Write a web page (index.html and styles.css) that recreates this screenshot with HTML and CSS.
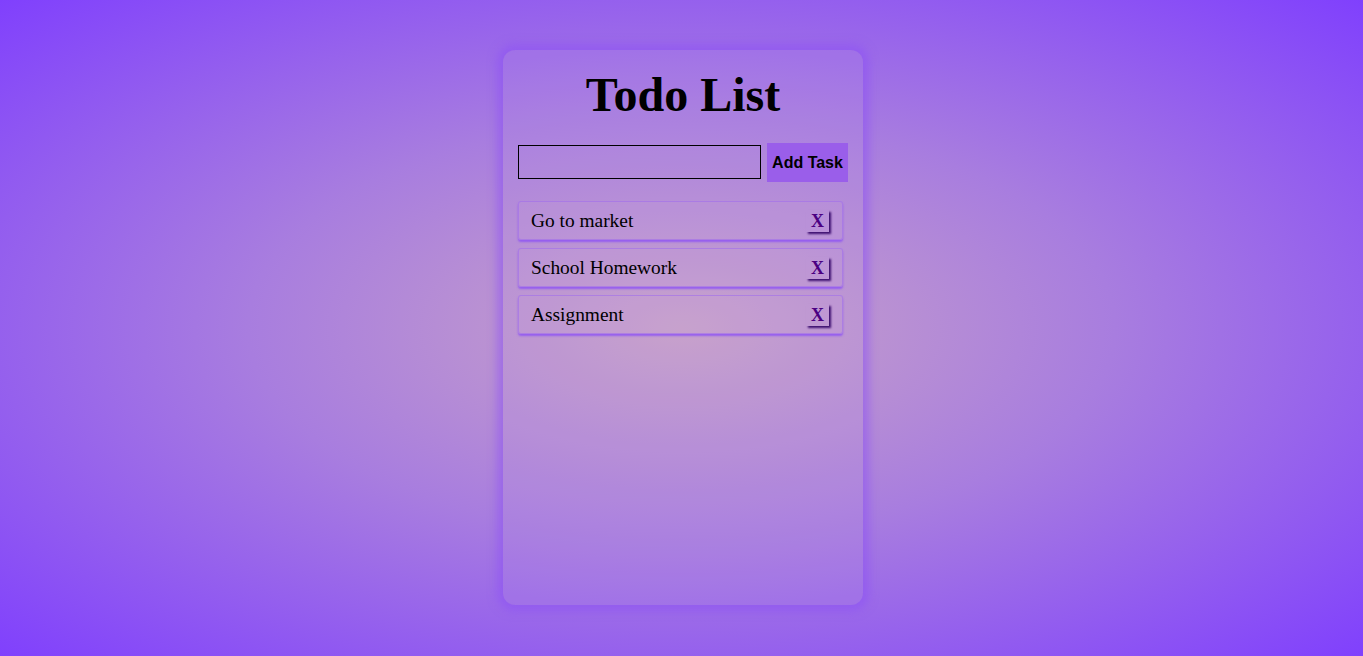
FILE: index.html
```html
<!DOCTYPE html>
<html>
<head>
<meta charset="utf-8">
<title>Todo List</title>
<link rel="stylesheet" href="styles.css">
</head>
<body>
<div class="card">
  <h1 class="title">Todo List</h1>
  <div class="entry">
    <input class="task-input" type="text">
    <button class="add-btn">Add Task</button>
  </div>
  <ul class="list">
    <li class="item"><span class="item-text">Go to market</span><button class="del">X</button></li>
    <li class="item"><span class="item-text">School Homework</span><button class="del">X</button></li>
    <li class="item"><span class="item-text">Assignment</span><button class="del">X</button></li>
  </ul>
</div>
</body>
</html>
```
FILE: styles.css
```css
html, body {
  height: 100%;
}
body {
  margin: 0;
  padding-left: 3px;
  box-sizing: border-box;
  font-family: "Liberation Serif", "Times New Roman", serif;
  background: radial-gradient(ellipse at 50% 50%, #c8a2c8 0%, #a87ddf 45%, #8040fd 100%);
  display: flex;
  justify-content: center;
  align-items: flex-start;
}
.card {
  margin-top: 50px;
  width: 330px;
  height: 525px;
  padding: 15px;
  background: rgba(200, 162, 230, 0.12);
  border-radius: 12px;
  box-shadow: 0 0 10px 6px rgba(140, 80, 245, 0.55);
}
.title {
  margin: 3px 0 0 0;
  font-size: 48px;
  font-weight: bold;
  text-align: center;
  line-height: 54px;
}
.entry {
  display: flex;
  align-items: flex-start;
  gap: 6px;
  margin-top: 21px;
}
.task-input {
  width: 243px;
  height: 34px;
  box-sizing: border-box;
  border: 1px solid #000;
  background: transparent;
  margin: 2px 0 0 0;
  padding: 0 4px;
}
.add-btn {
  width: 81px;
  height: 39px;
  border: none;
  background: #9a5eea;
  font-family: "Liberation Sans", Arial, sans-serif;
  font-weight: bold;
  font-size: 16px;
  color: #000;
  padding: 0;
}
.list {
  list-style: none;
  margin: 19px 0 0 0;
  padding: 0;
  display: flex;
  flex-direction: column;
  gap: 8px;
  width: 325px;
}
.item {
  display: flex;
  align-items: center;
  justify-content: space-between;
  height: 39px;
  box-sizing: border-box;
  padding: 0 13px 0 12px;
  border: 1px solid rgba(160, 110, 235, 0.6);
  border-radius: 3px;
  box-shadow: 0 2px 2px rgba(140, 80, 245, 0.8);
  background: rgba(200, 162, 220, 0.15);
  font-size: 19.4px;
}
.del {
  font-family: "Liberation Serif", "Times New Roman", serif;
  font-weight: bold;
  font-size: 18px;
  color: #4b0082;
  background: transparent;
  border: none;
  padding: 0 5px;
  height: 22px;
  line-height: 22px;
  box-shadow: 2px 2px 2px #3d0f70;
}
```
